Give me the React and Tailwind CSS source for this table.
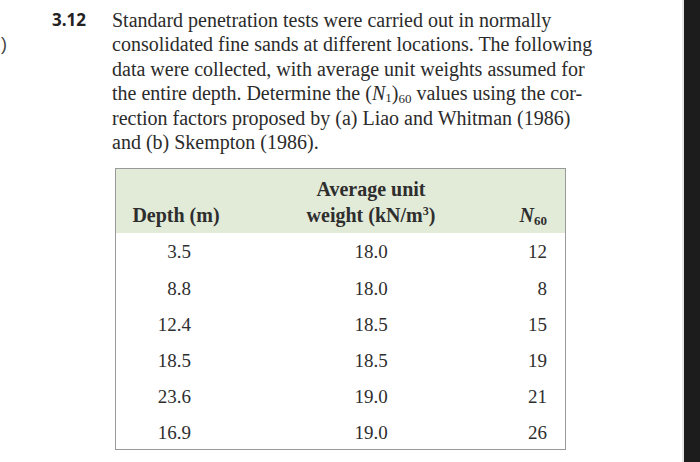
import React from "react";

const serif = { fontFamily: '"Liberation Serif", "Times New Roman", serif' };

const rows = [
  ["3.5", "18.0", "12", "h-[37px]"],
  ["8.8", "18.0", "8", "h-[36px]"],
  ["12.4", "18.5", "15", "h-[36px]"],
  ["18.5", "18.5", "19", "h-[36px]"],
  ["23.6", "19.0", "21", "h-[36px]"],
  ["16.9", "19.0", "26", "h-[35px]"],
];

export default function App() {
  return (
    <div className="w-[700px] h-[462px] bg-white flex overflow-hidden text-[#2b2b2b]">
      <div className="flex-1 flex flex-col">
        <div className="flex pt-[8px] h-[168px] shrink-0">
          <div
            className="w-[52px] pt-[24.4px] text-[18px] leading-[24.4px] pl-[1px] text-[#444]"
            style={{ fontFamily: '"Liberation Sans", Arial, sans-serif' }}
          >
            )
          </div>
          <div
            className="w-[60px] text-[17px] font-bold leading-[24.4px] text-[#222]"
            style={{ fontFamily: '"Open Sans", "Liberation Sans", sans-serif' }}
          >
            3.12
          </div>
          <div className="text-[20px] leading-[24.4px] whitespace-nowrap" style={serif}>
            <div className="h-[24.4px]">Standard penetration tests were carried out in normally</div>
            <div className="h-[24.4px]">consolidated fine sands at different locations. The following</div>
            <div className="h-[24.4px]">data were collected, with average unit weights assumed for</div>
            <div className="h-[24.4px]">
              the entire depth. Determine the (<i>N</i>
              <sub className="text-[13px] relative top-[2px] align-baseline leading-none">1</sub>)
              <sub className="text-[13px] relative top-[3px] align-baseline leading-none">60</sub> values using the cor-
            </div>
            <div className="h-[24.4px]">rection factors proposed by (a) Liao and Whitman (1986)</div>
            <div className="h-[24.4px]">and (b) Skempton (1986).</div>
          </div>
        </div>

        <div className="ml-[115px] w-[451px] shrink-0 border border-[#999999] text-[#2e2e2e]" style={serif}>
          <div className="grid grid-cols-[120px_270px_59px] bg-[#e2ebd8] h-[64px] items-end pb-[5px] text-[20px] leading-[25.5px] font-bold">
            <div className="text-center">Depth (m)</div>
            <div className="text-center">
              <div>Average unit</div>
              <div>
                weight (kN/m
                <sup className="text-[12px] relative -top-[7px] align-baseline leading-none">3</sup>)
              </div>
            </div>
            <div className="text-right pr-[18px]">
              <i>N</i>
              <sub className="text-[13px] relative top-[3px] align-baseline leading-none">60</sub>
            </div>
          </div>
          {rows.map((r, i) => (
            <div
              key={i}
              className={`grid grid-cols-[120px_270px_59px] pt-[7.6px] text-[19px] leading-[22px] overflow-hidden ${r[3]}`}
            >
              <div className="text-right pr-[45px]">{r[0]}</div>
              <div className="text-center">{r[1]}</div>
              <div className="text-right pr-[18px]">{r[2]}</div>
            </div>
          ))}
        </div>
      </div>
      <div className="w-[18px] border-l-2 border-[#e6e6e6] bg-[#1c1c1c]" />
    </div>
  );
}
